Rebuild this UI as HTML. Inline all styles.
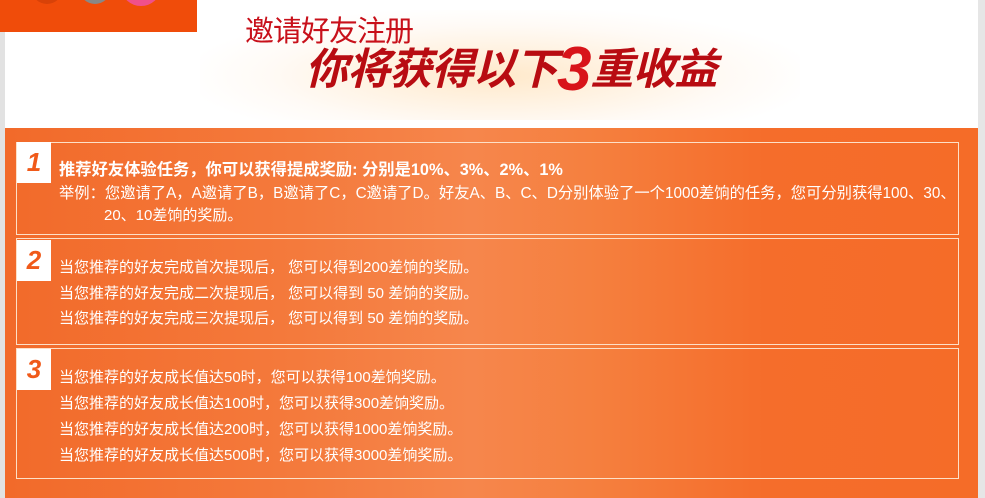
<!DOCTYPE html>
<html><head><meta charset="utf-8"><style>
*{margin:0;padding:0;box-sizing:border-box}
body{width:985px;height:498px;overflow:hidden;background:#fff;position:relative;font-family:"Liberation Sans","Noto Sans CJK SC",sans-serif}
.abs{position:absolute}
.glow{left:200px;top:10px;width:600px;height:110px;background:radial-gradient(ellipse at 50% 60%,rgba(255,215,160,.55),rgba(255,240,225,.3) 55%,rgba(255,255,255,0) 75%)}
.main{left:5px;top:128px;width:973px;height:370px;background:linear-gradient(90deg,#f26a2a 0%,#f47a3c 30%,#f6864c 48%,#f5803f 60%,#f56d2b 78%,#f56c28 100%)}
.box{position:absolute;left:16px;width:943px;border:1px solid #fde0c8}
.num{position:absolute;left:17px;width:34px;height:41px;background:#fff;color:#f05a1a;font:italic bold 26px "Liberation Sans",sans-serif;text-align:center;line-height:41px}
.t{position:absolute;left:59px;color:#fff;font-size:15px;white-space:nowrap}
</style></head><body>
<div class="abs" style="left:0;top:0;width:5px;height:498px;background:#e2e2e2"></div>
<div class="abs" style="left:978px;top:0;width:7px;height:498px;background:#e6e6e6"></div>
<div class="abs glow"></div>
<div class="abs" style="left:0;top:0;width:197px;height:32px;background:#f04c0a"></div>
<div class="abs" style="left:32px;top:-24px;width:30px;height:28px;border-radius:50%;background:#d84208"></div>
<div class="abs" style="left:80px;top:-24px;width:30px;height:28px;border-radius:50%;background:#888"></div>
<div class="abs" style="left:122px;top:-28px;width:38px;height:34px;border-radius:50%;background:#f0508a"></div>
<div class="abs" style="left:245px;top:8px;color:#c8101a;font-size:29px;letter-spacing:-1px;white-space:nowrap">邀请好友注册</div>
<div class="abs" style="left:305px;top:45px;color:#b80c12;font-size:43px;font-weight:bold;font-style:italic;white-space:nowrap;letter-spacing:-1px;line-height:50px">你将获得以下<span style="font-size:62px;color:#d8141a;vertical-align:-6px">3</span>重收益</div>
<div class="abs main"></div>
<div class="box" style="top:142px;height:93px"></div>
<div class="box" style="top:238px;height:107px"></div>
<div class="box" style="top:348px;height:131px"></div>
<div class="num" style="top:142px">1</div>
<div class="num" style="top:240px">2</div>
<div class="num" style="top:349px">3</div>
<div class="t" style="top:156px;font-weight:bold;font-size:16.3px">推荐好友体验任务，你可以获得提成奖励: 分别是10%、3%、2%、1%</div>
<div class="t" style="top:181px;font-size:15.3px">举例：您邀请了A，A邀请了B，B邀请了C，C邀请了D。好友A、B、C、D分别体验了一个1000差饷的任务，您可分别获得100、30、</div>
<div class="t" style="top:204px;left:104px">20、10差饷的奖励。</div>
<div class="t" style="top:256px">当您推荐的好友完成首次提现后， 您可以得到200差饷的奖励。</div>
<div class="t" style="top:282px">当您推荐的好友完成二次提现后， 您可以得到 50 差饷的奖励。</div>
<div class="t" style="top:307px">当您推荐的好友完成三次提现后， 您可以得到 50 差饷的奖励。</div>
<div class="t" style="top:366px">当您推荐的好友成长值达50时，您可以获得100差饷奖励。</div>
<div class="t" style="top:392px">当您推荐的好友成长值达100时，您可以获得300差饷奖励。</div>
<div class="t" style="top:418px">当您推荐的好友成长值达200时，您可以获得1000差饷奖励。</div>
<div class="t" style="top:444px">当您推荐的好友成长值达500时，您可以获得3000差饷奖励。</div>
</body></html>
